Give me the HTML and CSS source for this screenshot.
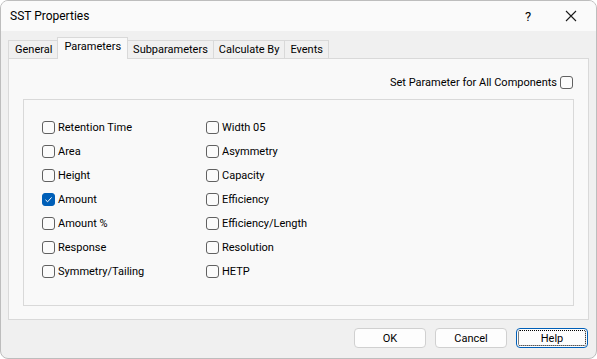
FILE: index.html
```html
<!DOCTYPE html>
<html lang="en">
<head>
  <meta charset="UTF-8" />
  <title>SST Properties</title>
  <link rel="stylesheet" href="styles.css">
</head>
<body>
  <div class="dialog">
    <div class="titlebar">
      <span class="title">SST Properties</span>
      <span class="help-btn">?</span>
      <span class="close-btn">
        <svg width="12" height="12" viewBox="0 0 12 12"><path d="M1 1 L11 11 M11 1 L1 11" stroke="#1a1a1a" stroke-width="1.1" fill="none"/></svg>
      </span>
    </div>
    <div class="tabs">
      <div class="tab">General</div>
      <div class="tab active">Parameters</div>
      <div class="tab">Subparameters</div>
      <div class="tab">Calculate By</div>
      <div class="tab">Events</div>
    </div>
    <div class="panel">
      <label class="all-row">Set Parameter for All Components <span class="box"></span></label>
      <div class="group">
        <label class="item"><span class="box"></span>Retention Time</label>
        <label class="item"><span class="box"></span>Width 05</label>
        <label class="item"><span class="box"></span>Area</label>
        <label class="item"><span class="box"></span>Asymmetry</label>
        <label class="item"><span class="box"></span>Height</label>
        <label class="item"><span class="box"></span>Capacity</label>
        <label class="item"><span class="box checked"><svg width="13" height="13" viewBox="0 0 13 13"><path d="M3.5 6.8 L5.6 8.8 L9.6 4.4" stroke="#fff" stroke-width="1" fill="none"/></svg></span>Amount</label>
        <label class="item"><span class="box"></span>Efficiency</label>
        <label class="item"><span class="box"></span>Amount %</label>
        <label class="item"><span class="box"></span>Efficiency/Length</label>
        <label class="item"><span class="box"></span>Response</label>
        <label class="item"><span class="box"></span>Resolution</label>
        <label class="item"><span class="box"></span>Symmetry/Tailing</label>
        <label class="item"><span class="box"></span>HETP</label>
      </div>
    </div>
    <div class="buttons">
      <button class="btn">OK</button>
      <button class="btn">Cancel</button>
      <button class="btn default"><span class="focus">Help</span></button>
    </div>
  </div>
</body>
</html>
```
FILE: styles.css
```css
body {
  margin: 0;
  font-family: Roboto, "Liberation Sans", sans-serif;
  font-size: 11px;
  color: #000;
  background: #fff;
}
.dialog {
  box-sizing: border-box;
  width: 597px;
  height: 359px;
  border: 1px solid #bdbdbd;
  border-radius: 8px;
  background: #f0f0f0;
  overflow: hidden;
  display: flex;
  flex-direction: column;
}
.titlebar {
  height: 30px;
  background: #fafafa;
  display: flex;
  align-items: center;
  padding-left: 9px;
}
.title {
  flex: 1;
  font-size: 12px;
}
.help-btn {
  width: 14px;
  font-size: 13px;
  margin-right: 26px;
}
.close-btn {
  display: flex;
  margin-right: 19px;
}
.tabs {
  display: flex;
  align-items: flex-end;
  height: 21px;
  margin-top: 6px;
  padding-left: 7px;
}
.tab {
  box-sizing: border-box;
  height: 18px;
  padding: 0 5px;
  border: 1px solid #d9d9d9;
  border-bottom: none;
  margin-right: -1px;
  line-height: 17px;
  background: #f0f0f0;
}
.tab:first-child {
  padding: 0 6px;
}
.tab.active {
  height: 22px;
  padding: 0 6px;
  background: #f9f9f9;
  line-height: 17px;
  margin: 0 -1px -1px -1px;
  position: relative;
  z-index: 1;
}
.panel {
  box-sizing: border-box;
  height: 262px;
  margin: 0 7px 0 7px;
  border: 1px solid #d9d9d9;
  background: #f9f9f9;
  display: flex;
  flex-direction: column;
}
.all-row {
  display: flex;
  justify-content: flex-end;
  align-items: center;
  gap: 3px;
  margin-top: 16px;
  padding-right: 15px;
  height: 14px;
}
.group {
  box-sizing: border-box;
  height: 207px;
  margin: 10px 14px 0 14px;
  border: 1px solid #d9d9d9;
  padding: 15px 0 0 18px;
  display: grid;
  grid-template-columns: 164px 1fr;
  grid-auto-rows: 24px;
  align-content: start;
}
.item {
  display: flex;
  align-items: center;
  gap: 3px;
}
.box {
  box-sizing: border-box;
  width: 13px;
  height: 13px;
  border: 1px solid #616161;
  border-radius: 3px;
  background: #fbfbfb;
  display: inline-flex;
}
.box.checked {
  background: #005fb8;
  border-color: #005fb8;
}
.box.checked svg {
  margin: -1px;
}
.buttons {
  display: flex;
  justify-content: flex-end;
  gap: 9px;
  margin-top: 8px;
  padding-right: 8px;
}
.btn {
  box-sizing: border-box;
  width: 72px;
  height: 20px;
  border: 1px solid #d0d0d0;
  border-radius: 4px;
  background: #fdfdfd;
  font-family: inherit;
  font-size: 11px;
  color: #000;
  padding: 0;
}
.btn.default {
  border: 1px solid #005fb8;
  padding: 1px;
}
.focus {
  box-sizing: border-box;
  display: block;
  height: 100%;
  border: 1px dotted #000;
  border-radius: 2px;
  line-height: 15px;
}
```
